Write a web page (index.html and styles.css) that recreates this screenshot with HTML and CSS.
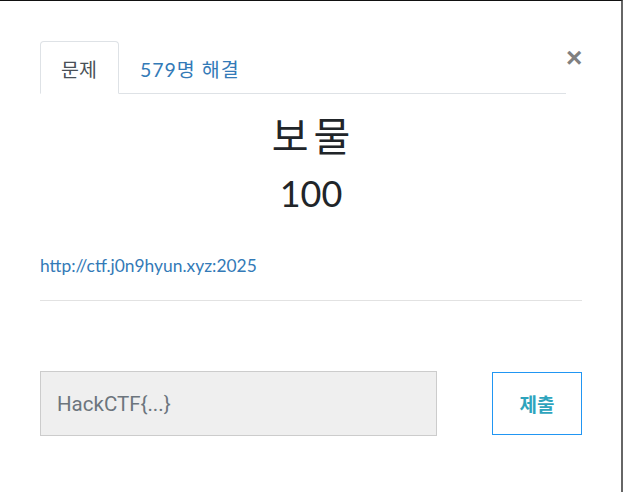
FILE: index.html
```html
<!doctype html>
<html>
  <head>
    <title>보물</title>
    <link rel="stylesheet" href="styles.css">
  </head>
  <body>
    <div class="modal">
      <div class="modal-head">
        <ul class="tabs">
          <li class="tab active">문제</li>
          <li class="tab"><a href="#">579명 해결</a></li>
        </ul>
        <button class="close" type="button">&times;</button>
      </div>
      <h2 class="title">보물</h2>
      <h3 class="value">100</h3>
      <div class="desc">
        <a href="#">http://ctf.j0n9hyun.xyz:2025</a>
      </div>
      <hr>
      <form class="submit-row">
        <input class="flag" type="text" placeholder="HackCTF{...}">
        <button class="submit" type="button">제출</button>
      </form>
    </div>
  </body>
</html>
```

FILE: styles.css
```css
body {
  margin: 0px;
  font-family: Lato, "Noto Sans CJK KR", sans-serif;
  color: #212529;
  background: white;
}
.modal {
  height: 492px;
  border-top: 1px solid #111;
  border-right: 2px solid #666;
  padding: 40px 39px 0px 40px;
  box-sizing: border-box;
}
.modal-head {
  display: flex;
  align-items: flex-start;
}
.tabs {
  display: flex;
  flex: 1;
  list-style: none;
  margin: 0px;
  padding: 0px;
  border-bottom: 1px solid #dee2e6;
}
.tab {
  padding: 0px 21px 0px 20px;
  height: 51px;
  line-height: 56px;
  font-size: 19.5px;
  border: 1px solid transparent;
  border-radius: 4px 4px 0px 0px;
  margin-bottom: -1px;
}
.tab.active {
  color: #495057;
  border-color: #dee2e6 #dee2e6 white;
  background: white;
}
.tab a {
  color: #337ab7;
  text-decoration: none;
  letter-spacing: 1px;
}
.close {
  width: 16px;
  margin-top: 4px;
  padding: 0px;
  border: 0px;
  background: none;
  font-family: Arial, sans-serif;
  font-size: 28px;
  font-weight: bold;
  line-height: 26px;
  color: #808080;
  text-align: right;
}
.title {
  margin: 18px 0px 0px;
  text-align: center;
  font-size: 40px;
  font-weight: normal;
  line-height: 48px;
  letter-spacing: 5px;
  text-indent: 5px;
}
.value {
  margin: 11px 0px 0px;
  text-align: center;
  font-size: 36px;
  font-weight: normal;
  line-height: 44px;
}
.desc {
  margin-top: 39px;
  font-size: 17.4px;
  line-height: 24px;
}
.desc a {
  color: #337ab7;
  text-decoration: none;
}
hr {
  margin: 22px 0px 0px;
  border: 0px;
  border-top: 1px solid #e2e2e2;
}
.submit-row {
  display: flex;
  justify-content: space-between;
  margin-top: 70px;
}
.flag {
  width: 397px;
  height: 65px;
  box-sizing: border-box;
  padding: 0px 16px;
  border: 1px solid #ccc;
  background: #efefef;
  font-family: Roboto, sans-serif;
  font-size: 20.5px;
  color: #495057;
}
.flag::placeholder {
  color: #6c757d;
}
.submit {
  width: 90px;
  height: 63px;
  margin-top: 1px;
  border: 1px solid #2196f3;
  background: white;
  font-family: "Noto Sans CJK KR", sans-serif;
  font-size: 19px;
  font-weight: bold;
  color: #2ea4bd;
}
```
